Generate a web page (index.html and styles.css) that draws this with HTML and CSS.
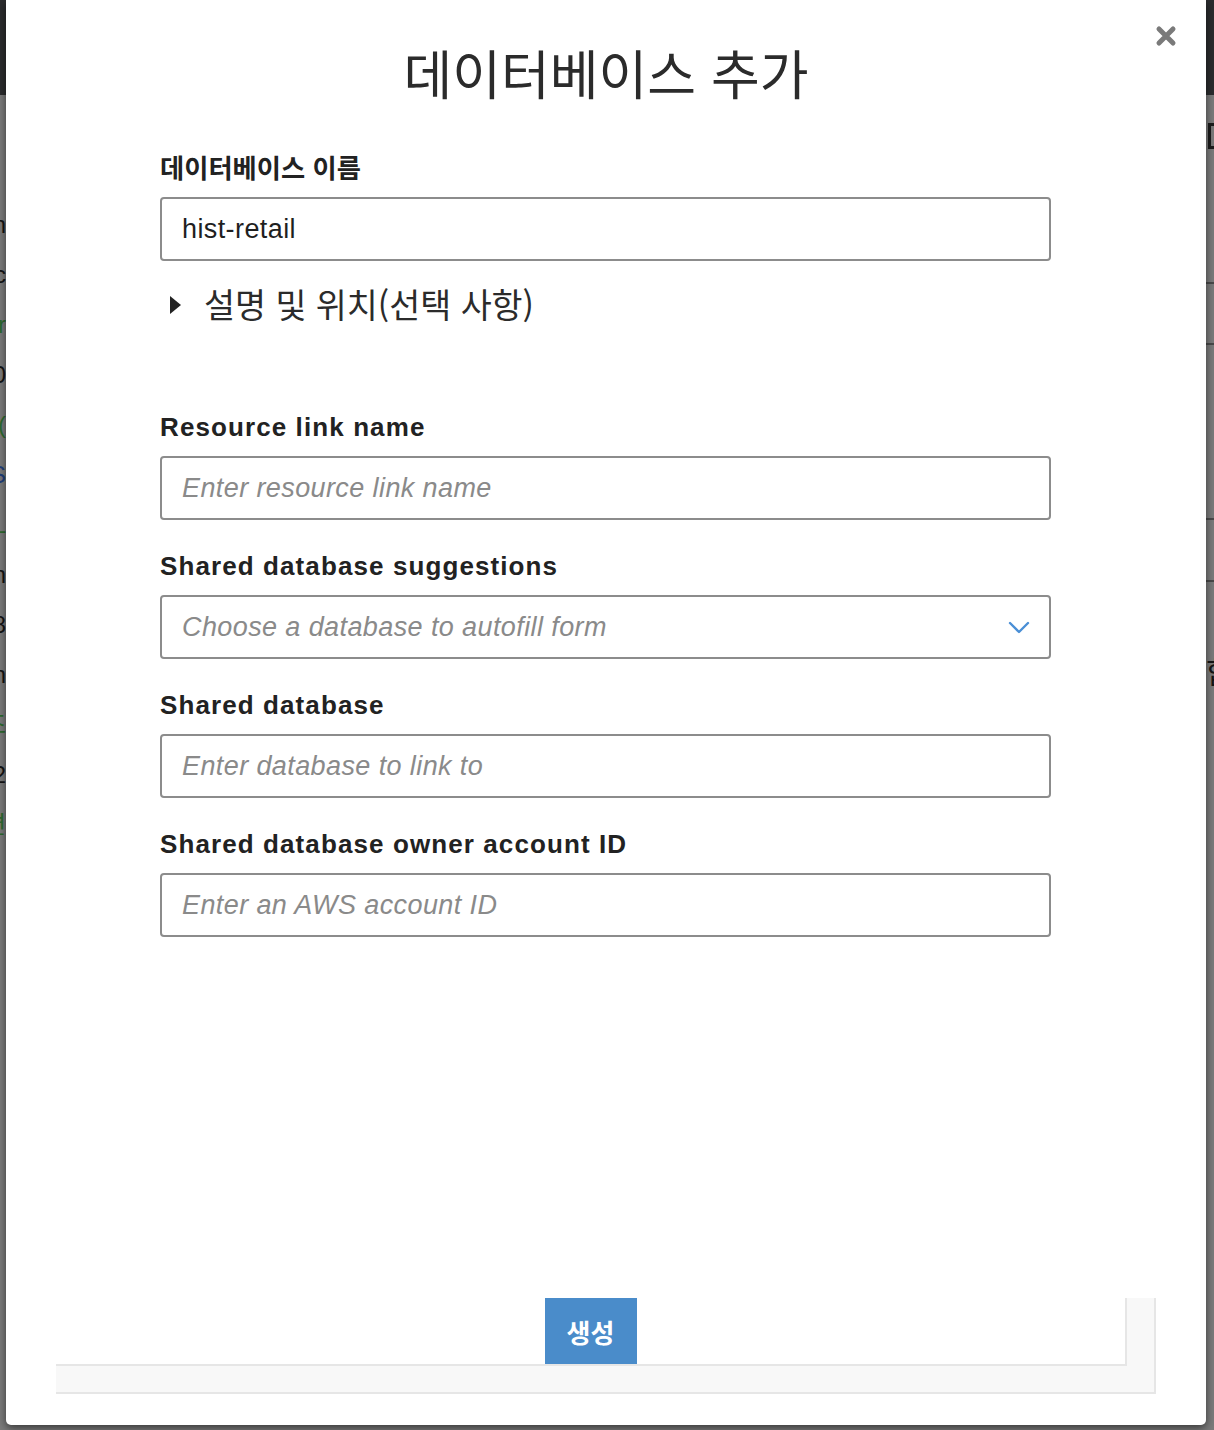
FILE: index.html
```html
<!DOCTYPE html>
<html lang="ko">
<head>
<meta charset="utf-8">
<title>데이터베이스 추가</title>
<link rel="stylesheet" href="styles.css">
</head>
<body>
<div class="backdrop">
  <div class="backdrop-header"></div>
  <div class="backdrop-body">
    <div class="side-left">
      <div class="frag green"><span>설정 ㅣ</span></div>
      <div class="frag"><span>Domain</span></div>
      <div class="frag"><span>abc</span></div>
      <div class="frag green"><span>Filter</span></div>
      <div class="frag"><span>100</span></div>
      <div class="frag green"><span>Go(</span></div>
      <div class="frag blue"><span>AWS</span></div>
      <div class="frag green"><span>ALL</span></div>
      <div class="frag"><span>Region</span></div>
      <div class="frag"><span>128</span></div>
      <div class="frag"><span>Run</span></div>
      <div class="frag green"><span>조</span></div>
      <div class="frag"><span>2</span></div>
      <div class="frag green"><span>면</span></div>
    </div>
    <div class="side-right">
      <div class="rbox"></div>
      <span class="bl bl1"></span>
      <span class="bl bl2"></span>
      <span class="bl bl3"></span>
      <span class="bl bl4"></span>
      <span class="rtext">합</span>
    </div>
  </div>
</div>

<div class="modal" role="dialog">
  <button class="close" aria-label="close">
    <svg width="22" height="22" viewBox="0 0 22 22"><path d="M4 4 L18 18 M18 4 L4 18" stroke="#7a7a7a" stroke-width="5" stroke-linecap="round"/></svg>
  </button>
  <h1 class="title">데이터베이스 추가</h1>

  <div class="form">
    <div class="field first">
      <label class="label ko">데이터베이스 이름</label>
      <div class="input"><span class="value">hist-retail</span></div>
    </div>

    <div class="disclosure">
      <svg class="caret" width="11" height="18" viewBox="0 0 11 18"><path d="M0 0 L11 9 L0 18 Z" fill="#222"/></svg>
      <span class="disclosure-text">설명 및 위치(선택 사항)</span>
    </div>

    <div class="field spaced">
      <label class="label">Resource link name</label>
      <div class="input"><span class="placeholder">Enter resource link name</span></div>
    </div>

    <div class="field">
      <label class="label">Shared database suggestions</label>
      <div class="input select"><span class="placeholder">Choose a database to autofill form</span>
        <svg class="chevron" width="22" height="13" viewBox="0 0 22 13"><path d="M2 2 L11 11 L20 2" fill="none" stroke="#4a8fd6" stroke-width="2.4" stroke-linecap="round" stroke-linejoin="round"/></svg>
      </div>
    </div>

    <div class="field">
      <label class="label">Shared database</label>
      <div class="input"><span class="placeholder">Enter database to link to</span></div>
    </div>

    <div class="field">
      <label class="label">Shared database owner account ID</label>
      <div class="input"><span class="placeholder">Enter an AWS account ID</span></div>
    </div>
  </div>

  <div class="footer">
    <div class="footer-inner">
      <button class="create">생성</button>
    </div>
  </div>
</div>
</body>
</html>
```

FILE: styles.css
```css
html, body {
  margin: 0;
  padding: 0;
}
body {
  width: 1214px;
  height: 1430px;
  overflow: hidden;
  background: #7b7b7b;
  position: relative;
  font-family: "Liberation Sans", "Noto Sans CJK KR", sans-serif;
}
.backdrop-header {
  height: 95px;
  background: #2b2c2e;
}
.backdrop-body {
  display: flex;
  justify-content: space-between;
}
.side-left {
  width: 6px;
  overflow: hidden;
  padding-top: 55px;
}
.frag {
  display: flex;
  justify-content: flex-end;
  height: 50px;
  line-height: 50px;
  font-size: 24px;
  white-space: nowrap;
  color: #141414;
}
.frag span { flex: none; }
.frag.green { color: #2e6a2e; }
.frag.blue { color: #213f7a; }

.side-right {
  width: 8px;
  position: relative;
  overflow: hidden;
}
.rbox {
  position: absolute;
  top: 28px;
  left: 2px;
  width: 20px;
  height: 20px;
  border: 3px solid #1c1c1c;
}
.bl {
  position: absolute;
  left: 0;
  width: 10px;
  height: 2px;
  background: #4a4a4a;
}
.bl1 { top: 187px; }
.bl2 { top: 248px; }
.bl3 { top: 423px; }
.bl4 { top: 485px; }
.rtext {
  position: absolute;
  top: 555px;
  left: 0;
  font-family: "Noto Sans CJK KR", sans-serif;
  font-size: 30px;
  line-height: 40px;
  color: #151515;
}

.modal {
  position: absolute;
  left: 6px;
  top: 0;
  width: 1200px;
  height: 1425px;
  box-sizing: border-box;
  background: #fff;
  border-radius: 0 0 5px 5px;
  box-shadow: 0 3px 9px rgba(0, 0, 0, 0.55);
  padding: 40px 0 31px;
  display: flex;
  flex-direction: column;
}
.close {
  position: absolute;
  top: 25px;
  right: 29px;
  width: 22px;
  height: 22px;
  padding: 0;
  border: 0;
  background: none;
  display: block;
}
.close svg { display: block; }

.title {
  margin: 0 0 46px;
  height: 64px;
  line-height: 64px;
  text-align: center;
  font-family: "Noto Sans CJK KR", sans-serif;
  font-weight: 400;
  font-size: 53px;
  color: #2b2b2b;
}

.form {
  margin-left: 154px;
  width: 891px;
}
.field {
  margin-top: 28px;
}
.field.first { margin-top: 0; }
.field.spaced { margin-top: 84px; }

.label {
  display: block;
  line-height: 36px;
  height: 36px;
  margin-bottom: 11px;
  font-weight: 700;
  font-size: 26px;
  letter-spacing: 1.1px;
  color: #222;
}
.label.ko {
  font-family: "Noto Sans CJK KR", sans-serif;
  font-size: 26.3px;
  letter-spacing: 0;
  line-height: 34px;
  height: 34px;
  margin-bottom: 13px;
}

.input {
  box-sizing: border-box;
  height: 64px;
  border: 2px solid #8c8c8c;
  border-radius: 4px;
  padding: 0 19px 0 20px;
  display: flex;
  align-items: center;
  font-size: 27px;
  letter-spacing: 0.4px;
}
.value { color: #1f1f1f; }
.placeholder {
  color: #8a8a8a;
  font-style: italic;
}
.select {
  justify-content: space-between;
}
.chevron { display: block; }

.disclosure {
  margin-top: 24px;
  height: 40px;
  display: flex;
  align-items: center;
  padding-left: 10px;
}
.caret { display: block; margin-right: 23px; }
.disclosure-text {
  font-family: "Noto Sans CJK KR", sans-serif;
  font-size: 33.7px;
  color: #2b2b2b;
  line-height: 38px;
  padding-bottom: 2px;
}

.footer {
  margin-top: auto;
  margin-left: 50px;
  width: 1100px;
  box-sizing: border-box;
  background: #f8f8f8;
  border-right: 2px solid #e6e6e6;
  border-bottom: 2px solid #e6e6e6;
  padding: 0 27px 26px 0;
}
.footer-inner {
  background: #fff;
  border-right: 2px solid #e6e6e6;
  border-bottom: 2px solid #e6e6e6;
  display: flex;
  justify-content: center;
}
.create {
  width: 92px;
  height: 66px;
  border: 0;
  padding: 0;
  background: #4a8cca;
  color: #fff;
  font-family: "Noto Sans CJK KR", sans-serif;
  font-weight: 700;
  font-size: 26px;
}
```
